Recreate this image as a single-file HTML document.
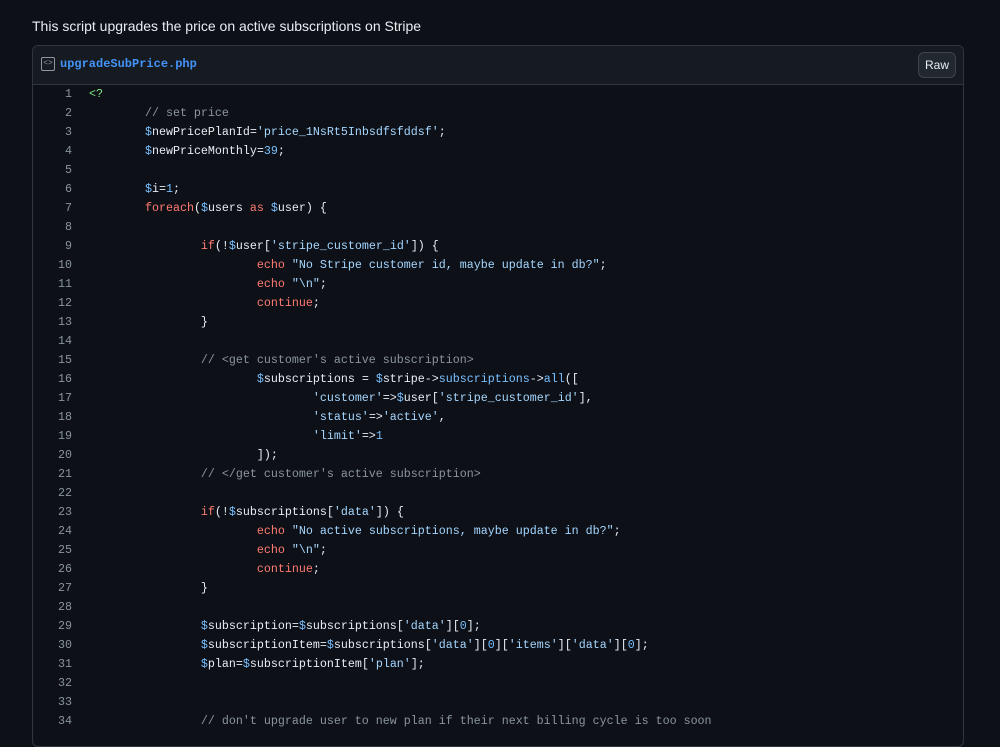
<!DOCTYPE html>
<html><head><meta charset="utf-8"><style>
body{margin:0;background:#0d1117;width:1000px;height:726px;overflow:hidden;font-family:"Liberation Sans",sans-serif;color:#e6edf3}
.desc{position:absolute;left:32px;top:18px;font-size:14px}
.box{position:absolute;left:32px;top:45px;width:930px;height:700px;border:1px solid #30363d;border-radius:6px;overflow:hidden}
.hd{height:38px;background:#161b22;border-bottom:1px solid #30363d;position:relative}
.icon{position:absolute;left:8px;top:11px;width:12px;height:12px;border:1px solid #9198a1;border-radius:2px;font:8px "Liberation Mono",monospace;color:#9198a1;text-align:center;line-height:12px}
.fn{position:absolute;left:27px;top:11px;font:bold 12px "Liberation Mono",monospace;color:#4493f8}
.raw{position:absolute;right:7px;top:6px;width:38px;height:26px;background:#212830;border:1px solid #3d444d;border-radius:6px;box-sizing:border-box;font-size:12px;text-align:center;line-height:24px}
pre{margin:0;font:11.67px/19px "Liberation Mono",monospace;position:absolute;top:39px;left:0}
.n{display:inline-block;width:39px;text-align:right;color:#8b949e;margin-right:17px}
.c{color:#8b949e}.s{color:#a5d6ff}.k{color:#ff7b72}.v{color:#79c0ff}.g{color:#7ee787}
</style></head><body>
<div class="desc">This script upgrades the price on active subscriptions on Stripe</div>
<div class="box">
<div class="hd"><div class="icon">&lt;&gt;</div><div class="fn">upgradeSubPrice.php</div><div class="raw">Raw</div></div>
<pre><span class="n">1</span><span class="g">&lt;?</span>
<span class="n">2</span>        <span class="c">// set price</span>
<span class="n">3</span>        <span class="v">$</span>newPricePlanId=<span class="s">'price_1NsRt5Inbsdfsfddsf'</span>;
<span class="n">4</span>        <span class="v">$</span>newPriceMonthly=<span class="v">39</span>;
<span class="n">5</span>
<span class="n">6</span>        <span class="v">$</span>i=<span class="v">1</span>;
<span class="n">7</span>        <span class="k">foreach</span>(<span class="v">$</span>users <span class="k">as</span> <span class="v">$</span>user) {
<span class="n">8</span>
<span class="n">9</span>                <span class="k">if</span>(!<span class="v">$</span>user[<span class="s">'stripe_customer_id'</span>]) {
<span class="n">10</span>                        <span class="k">echo</span> <span class="s">"No Stripe customer id, maybe update in db?"</span>;
<span class="n">11</span>                        <span class="k">echo</span> <span class="s">"\n"</span>;
<span class="n">12</span>                        <span class="k">continue</span>;
<span class="n">13</span>                }
<span class="n">14</span>
<span class="n">15</span>                <span class="c">// &lt;get customer's active subscription&gt;</span>
<span class="n">16</span>                        <span class="v">$</span>subscriptions = <span class="v">$</span>stripe-&gt;<span class="v">subscriptions</span>-&gt;<span class="v">all</span>([
<span class="n">17</span>                                <span class="s">'customer'</span>=&gt;<span class="v">$</span>user[<span class="s">'stripe_customer_id'</span>],
<span class="n">18</span>                                <span class="s">'status'</span>=&gt;<span class="s">'active'</span>,
<span class="n">19</span>                                <span class="s">'limit'</span>=&gt;<span class="v">1</span>
<span class="n">20</span>                        ]);
<span class="n">21</span>                <span class="c">// &lt;/get customer's active subscription&gt;</span>
<span class="n">22</span>
<span class="n">23</span>                <span class="k">if</span>(!<span class="v">$</span>subscriptions[<span class="s">'data'</span>]) {
<span class="n">24</span>                        <span class="k">echo</span> <span class="s">"No active subscriptions, maybe update in db?"</span>;
<span class="n">25</span>                        <span class="k">echo</span> <span class="s">"\n"</span>;
<span class="n">26</span>                        <span class="k">continue</span>;
<span class="n">27</span>                }
<span class="n">28</span>
<span class="n">29</span>                <span class="v">$</span>subscription=<span class="v">$</span>subscriptions[<span class="s">'data'</span>][<span class="v">0</span>];
<span class="n">30</span>                <span class="v">$</span>subscriptionItem=<span class="v">$</span>subscriptions[<span class="s">'data'</span>][<span class="v">0</span>][<span class="s">'items'</span>][<span class="s">'data'</span>][<span class="v">0</span>];
<span class="n">31</span>                <span class="v">$</span>plan=<span class="v">$</span>subscriptionItem[<span class="s">'plan'</span>];
<span class="n">32</span>
<span class="n">33</span>
<span class="n">34</span>                <span class="c">// don't upgrade user to new plan if their next billing cycle is too soon</span>
</pre>
</div>
</body></html>
